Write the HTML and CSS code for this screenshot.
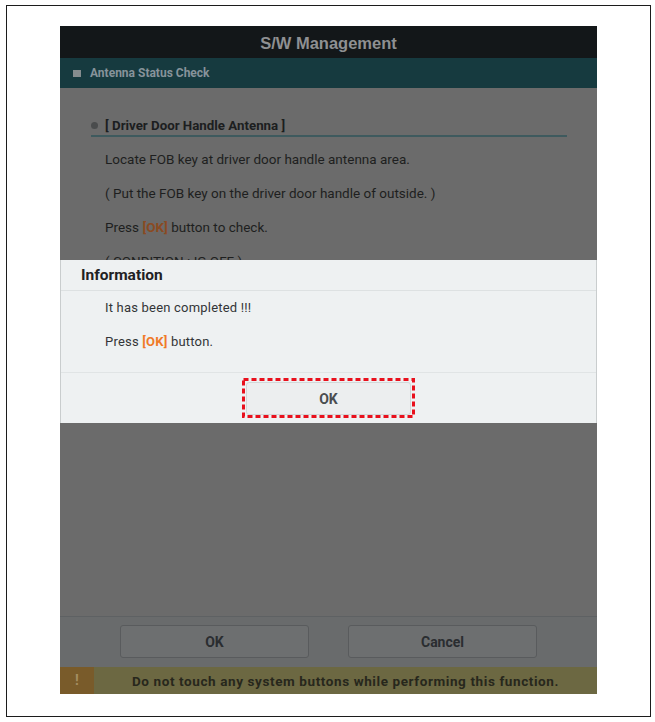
FILE: index.html
```html
<!DOCTYPE html>
<html lang="en">
<head>
    <meta charset="UTF-8">
    <meta name="viewport" content="width=device-width, initial-scale=1.0">
    <title>S/W Management</title>
    <link rel="stylesheet" href="styles.css">
</head>
<body>
    <div class="frame">
        <div class="screen">
            <div class="topbar">S/W Management</div>
            <div class="subbar"><span class="square"></span>Antenna Status Check</div>

            <div class="content">
                <h3 class="heading"><span class="dot"></span>[ Driver Door Handle Antenna ]</h3>
                <p>Locate FOB key at driver door handle antenna area.</p>
                <p>( Put the FOB key on the driver door handle of outside. )</p>
                <p>Press <b class="key">[OK]</b> button to check.</p>
                <p>( CONDITION : IG OFF )</p>
            </div>

            <div class="buttons">
                <button class="btn">OK</button>
                <button class="btn">Cancel</button>
            </div>

            <div class="warning">
                <span class="mark">!</span>
                <span class="warnText">Do not touch any system buttons while performing this function.</span>
            </div>

            <div class="dialog">
                <div class="dialogTitle">Information</div>
                <div class="dialogBody">
                    <p>It has been completed !!!</p>
                    <p>Press <b class="key">[OK]</b> button.</p>
                </div>
                <div class="dialogFoot">
                    <div class="okWrap">
                        <button class="okBtn">OK</button>
                        <svg class="marker" width="173" height="40" viewBox="0 0 173 40">
                            <rect x="1.5" y="1.5" width="170" height="37" fill="none" stroke="#e8101c" stroke-width="3" stroke-dasharray="5 3"/>
                        </svg>
                    </div>
                </div>
            </div>
        </div>
    </div>
</body>
</html>
```

FILE: styles.css
```css
*{
    padding: 0px;
    margin: 0px;
    box-sizing: border-box;
}
body{
    background-color: #ffffff;
    font-family: Roboto, "Liberation Sans", Arial, sans-serif;
}
.frame{
    margin: 5px 0 0 6px;
    width: 645px;
    height: 712px;
    border: 1px solid #1c1c1c;
    padding: 20px 0 0 53px;
}
.screen{
    position: relative;
    width: 537px;
    height: 668px;
    display: flex;
    flex-direction: column;
    background-color: #6b6b6b;
}
.topbar{
    height: 32px;
    line-height: 34px;
    background-color: #131719;
    color: #8e9092;
    text-align: center;
    font-family: "Liberation Sans", Arial, sans-serif;
    font-weight: bold;
    font-size: 16.5px;
}
.subbar{
    height: 30px;
    display: flex;
    align-items: center;
    padding-left: 13px;
    background-color: #163a3f;
    color: #87939a;
    font-weight: bold;
    font-size: 12px;
}
.square{
    width: 8px;
    height: 7px;
    margin-right: 9px;
    background-color: #858c8e;
}

.content{
    flex: 1;
    padding-top: 29px;
    overflow: hidden;
}
.heading{
    display: flex;
    align-items: center;
    height: 20px;
    margin: 0 30px 5px 31px;
    border-bottom: 2px solid #3e5a5e;
    padding-bottom: 1px;
    font-size: 13.3px;
    color: #1c1e20;
}
.dot{
    width: 7px;
    height: 7px;
    border-radius: 50%;
    background-color: #4a4c4d;
    margin-right: 7px;
}
.content p{
    padding-left: 45px;
    line-height: 34px;
    font-size: 13.5px;
    color: #1e1f20;
}
.content .key{
    color: #8a4a22;
}

.buttons{
    height: 51px;
    border-top: 1px solid #5e6163;
    background-color: #696b6c;
    display: flex;
    justify-content: center;
    gap: 39px;
    padding-top: 8px;
}
.btn{
    width: 189px;
    height: 33px;
    background-color: #6d6f70;
    border: 1px solid #595b5d;
    border-radius: 3px;
    font-family: Roboto, sans-serif;
    font-weight: bold;
    font-size: 14px;
    color: #2a2d30;
}

.warning{
    height: 27px;
    display: flex;
    align-items: center;
    background-color: #6c6842;
}
.mark{
    width: 34px;
    height: 27px;
    line-height: 27px;
    text-align: center;
    background-color: #795b2a;
    color: #a48e62;
    font-weight: bold;
    font-size: 14px;
}
.warnText{
    flex: 1;
    text-align: center;
    font-weight: bold;
    font-size: 13.5px;
    letter-spacing: 0.6px;
    color: #27271c;
}

.dialog{
    position: absolute;
    top: 234px;
    left: 0;
    width: 537px;
    height: 163px;
    background-color: #eef1f2;
    border-left: 1px solid #c9cdce;
    border-right: 1px solid #c9cdce;
}
.dialogTitle{
    height: 31px;
    line-height: 31px;
    padding-left: 20px;
    border-bottom: 1px solid #dde1e2;
    font-weight: bold;
    font-size: 15.5px;
    color: #1f2123;
}
.dialogBody{
    height: 82px;
    border-bottom: 1px solid #e0e4e5;
}
.dialogBody p{
    padding-left: 44px;
    line-height: 34px;
    font-size: 13px;
    letter-spacing: 0.2px;
    color: #333537;
}
.dialogBody .key{
    color: #f07a28;
}
.dialogFoot{
    display: flex;
    justify-content: center;
    padding-top: 5px;
}
.okWrap{
    position: relative;
    width: 173px;
    height: 40px;
    padding: 4px 3px 3px 4px;
}
.okBtn{
    width: 165px;
    height: 33px;
    background-color: #eceeef;
    border: 1px solid #d3d7d8;
    border-radius: 3px;
    font-family: Roboto, sans-serif;
    font-weight: bold;
    font-size: 14px;
    color: #4a4d50;
}
.marker{
    position: absolute;
    top: 0;
    left: 0;
}
```
